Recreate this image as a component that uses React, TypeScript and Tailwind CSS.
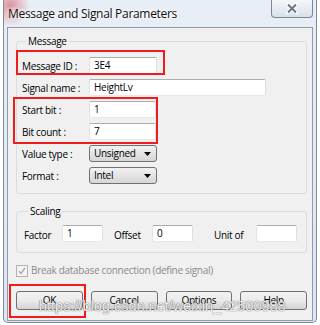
import React from "react";

const font = "font-['Open_Sans','Noto_Sans',sans-serif]";

function TextBox({ value, className }: { value?: string; className: string }) {
  return (
    <div
      className={`h-[17px] rounded-[2px] border border-[#abadb3] border-r-[#dbdfe6] border-b-[#e3e9ef] border-l-[#e2e3ea] bg-white pl-[4px] text-[10px] leading-[15px] text-black ${className}`}
    >
      {value}
    </div>
  );
}

function Combo({ value }: { value: string }) {
  return (
    <div className="flex h-[17px] w-[68px] items-center justify-between rounded-[3px] border border-[#707070] bg-gradient-to-b from-[#f2f2f2] to-[#d6d6d6] pl-[4px] pr-[5px] text-[10px] text-black">
      <span>{value}</span>
      <svg width="7" height="4" viewBox="0 0 7 4">
        <path d="M0 0h7L3.5 4z" fill="#000" />
      </svg>
    </div>
  );
}

function Row({ label, children }: { label: string; children: React.ReactNode }) {
  return (
    <div className="flex h-[17px] items-center">
      <span className="w-[67px] pt-[2px] text-[10px] text-black">{label}</span>
      {children}
    </div>
  );
}

function Button({ label }: { label: string }) {
  return (
    <div className="flex h-[19px] w-[67px] items-center justify-center rounded-[3px] border border-[#707070] bg-gradient-to-b from-[#f2f2f2] via-[#ebebeb] to-[#d2d2d2] text-[10px] text-black">
      {label}
    </div>
  );
}

export default function App() {
  return (
    <div className={`relative h-[325px] w-[320px] overflow-hidden bg-white tracking-[-0.3px] ${font}`}>
      {/* window frame */}
      <div className="ml-[3px] flex h-[323px] w-[314px] flex-col rounded-b-[5px] border border-t-0 border-[#7f8b98] bg-[radial-gradient(circle_at_6px_6px,rgba(214,70,84,0.55),transparent_20px),linear-gradient(#e8eef5,#dde5ee)] px-[3px] pb-[1px]">
        {/* title bar */}
        <div className="flex h-[27px] shrink-0 justify-between">
          <span className="pl-[1px] pt-[5px] text-[12px] text-[#111] [text-shadow:0_0_4px_#fff,0_0_4px_#fff]">
            Message and Signal Parameters
          </span>
          <div className="flex h-[18px] w-[42px] items-center justify-center rounded-b-[4px] border border-t-0 border-[#7d8895] bg-gradient-to-b from-[#f4f7fa] to-[#d8e0e9]">
            <svg width="12" height="11" viewBox="0 0 12 11">
              <path d="M2 1.5l8 8M10 1.5l-8 8" stroke="#fff" strokeWidth="4" strokeLinecap="round" />
              <path d="M2 1.5l8 8M10 1.5l-8 8" stroke="#6b7682" strokeWidth="2" />
            </svg>
          </div>
        </div>

        {/* client area */}
        <div className="flex flex-1 flex-col border border-[#8f9cab] bg-[#f0f0f0] pl-[8px] pr-[5px]">
          <fieldset className="mt-[6px] rounded-[3px] border border-[#d5dfe5] pb-[9px] pl-[5px] pt-[9px]">
            <legend className="ml-[4px] px-[2px] text-[10px] leading-[14px] text-black">Message</legend>
            <div className="flex flex-col gap-[5px]">
              <Row label="Message ID :">
                <TextBox value="3E4" className="w-[68px]" />
              </Row>
              <Row label="Signal name :">
                <TextBox value="HeightLv" className="w-[177px]" />
              </Row>
              <Row label="Start bit :">
                <TextBox value="1" className="w-[67px]" />
              </Row>
              <Row label="Bit count :">
                <TextBox value="7" className="w-[67px]" />
              </Row>
              <Row label="Value type :">
                <Combo value="Unsigned" />
              </Row>
              <Row label="Format :">
                <Combo value="Intel" />
              </Row>
            </div>
          </fieldset>

          <fieldset className="mt-[10px] rounded-[3px] border border-[#d5dfe5] pb-[10px] pl-[7px] pt-[7px]">
            <legend className="ml-[4px] px-[2px] text-[10px] leading-[14px] text-black">Scaling</legend>
            <div className="flex h-[17px] items-center text-[10px] text-black">
              <span className="w-[38px] pt-[3px]">Factor</span>
              <TextBox value="1" className="w-[41px]" />
              <span className="ml-[11px] w-[38px] pt-[3px]">Offset</span>
              <TextBox value="0" className="w-[41px]" />
              <span className="ml-[21px] w-[42px] pt-[3px]">Unit of</span>
              <TextBox className="w-[41px]" />
            </div>
          </fieldset>

          <div className="mt-[11px] flex h-[13px] items-center gap-[3px]">
            <div className="flex h-[12px] w-[12px] items-center justify-center border border-[#b1b1b1] bg-[#f4f4f4]">
              <svg width="8" height="8" viewBox="0 0 8 8">
                <path d="M1 4.2l2 2.3L7 1" stroke="#a8a8a8" strokeWidth="1.3" fill="none" />
              </svg>
            </div>
            <span className="text-[10px] text-[#8a8a8a]">Break database connection (define signal)</span>
          </div>

          <div className="mt-[14px] flex gap-[8px]">
            <Button label="OK" />
            <Button label="Cancel" />
            <Button label="Options" />
            <Button label="Help" />
          </div>
        </div>
      </div>

      {/* red annotation boxes */}
      <div className="absolute left-[16px] top-[50px] h-[25px] w-[149px] border-2 border-[#ee1c1c]" />
      <div className="absolute left-[13px] top-[97px] h-[47px] w-[145px] border-2 border-[#ee1c1c]" />
      <div className="absolute left-[9px] top-[284px] h-[34px] w-[77px] border-2 border-[#ee1c1c]" />

      {/* watermark */}
      <span className="absolute left-[39px] top-[297px] font-['Liberation_Sans',sans-serif] text-[14.5px] leading-[18px] tracking-normal text-white/90 [text-shadow:0_0_1px_#666,0_0_1px_#666]">
        https://blog.csdn.net/weixin_42500988
      </span>
    </div>
  );
}
